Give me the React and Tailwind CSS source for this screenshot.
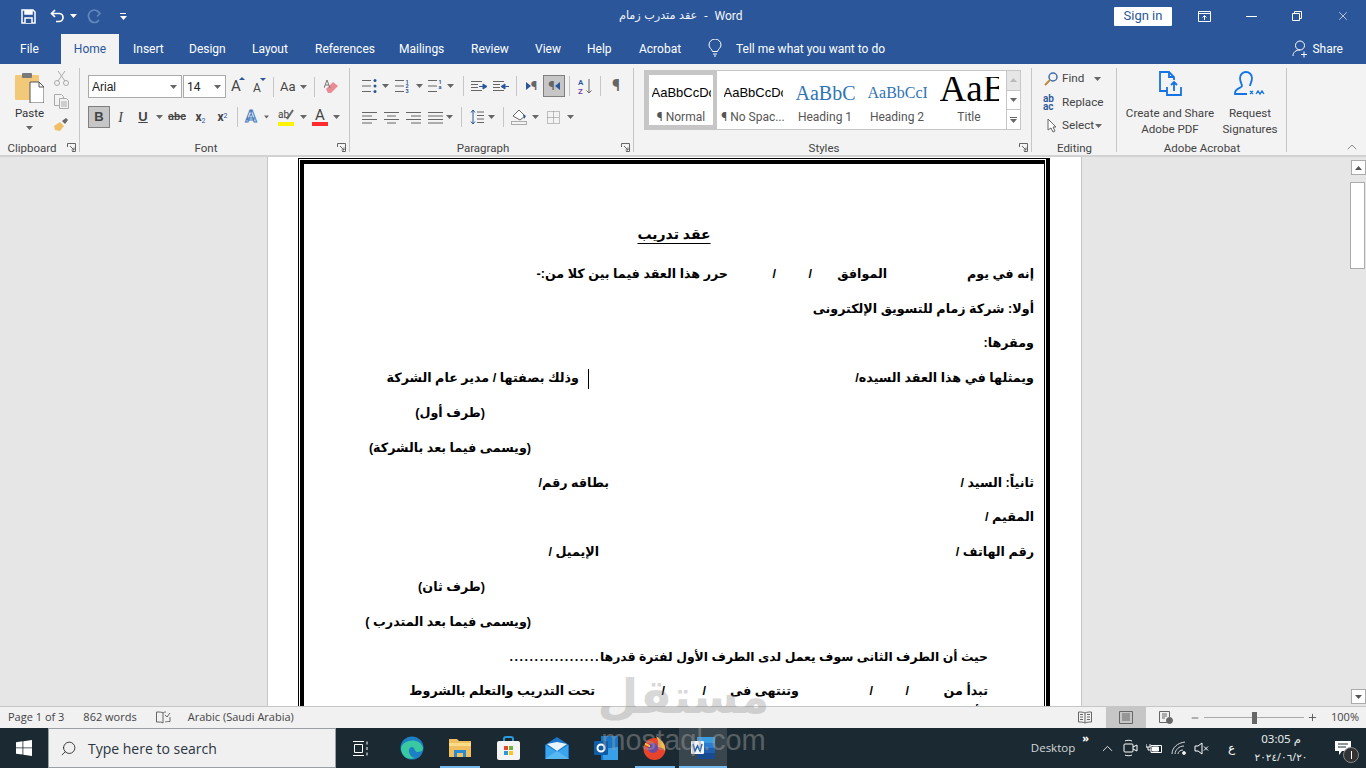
import React from "react";
import { Search, ChevronUp, X, Minus, Plus } from "lucide-react";

const Caret = ({ c = "#666" }) => (
  <svg width="7" height="4" viewBox="0 0 7 4"><path d="M0 0h7L3.5 4z" fill={c} /></svg>
);

// a cell of fixed width in the ribbon rows
const Cell = ({ w, children, on }) => (
  <div className={`${w} h-[22px] flex items-center justify-center shrink-0 ${on ? "bg-[#c6c6c6] border border-[#7f7f7f]" : ""}`}>{children}</div>
);

const Sep = () => <div className="w-px h-[20px] bg-[#c6c6c6] shrink-0" />;

const Launcher = () => (
  <svg width="9" height="9" viewBox="0 0 9 9" fill="none" stroke="#666"><path d="M.5 4V.5h8v8H5" /><path d="M3 3l4 4M7 4.5V7H4.5" /></svg>
);

const Lines = ({ rows }) => (
  <svg width="15" height="13" viewBox="0 0 15 13" stroke="#666" strokeWidth="1">
    {rows.map((r, i) => <path key={i} d={`M${r[0]} ${i * 3.5 + 1.5}H${r[1]}`} />)}
  </svg>
);

const Bullets = ({ dots }) => (
  <svg width="15" height="14" viewBox="0 0 15 14">
    <path d="M0 1.5h9M0 7h9M0 12.5h9" stroke="#666" />
    {dots}
  </svg>
);

function TitleBar() {
  return (
    <div className="h-[32px] flex items-center relative text-white bg-[#2b579a] [font-family:Roboto,sans-serif]">
      <div className="w-[21px]" />
      <svg width="15" height="15" viewBox="0 0 15 15" fill="none" stroke="#fff" strokeWidth="1.5">
        <path d="M1 1h11l2 2v11H1z" /><path d="M4 1v4h7V1" fill="#fff" /><path d="M4 14V9h7v5" fill="#2b579a" />
      </svg>
      <div className="w-[14px]" />
      <svg width="16" height="14" viewBox="0 0 16 14" fill="none" stroke="#fff" strokeWidth="1.7">
        <path d="M5 1L1.5 4.5 5 8" /><path d="M2 4.5h7a4 4 0 010 8H6" />
      </svg>
      <div className="ml-[4px]"><Caret c="#fff" /></div>
      <svg className="ml-[10px]" width="15" height="15" viewBox="0 0 15 15" fill="none" stroke="#5f86bd" strokeWidth="1.7">
        <path d="M10 1.5l3 3-3 3" /><path d="M12.5 4.5A5.5 5.5 0 102 9a5.5 5.5 0 0010 2" />
      </svg>
      <svg className="ml-[18px]" width="7" height="7" viewBox="0 0 7 7" fill="#fff"><path d="M0 0h6v1H0zM0 3h7L3.500 7z" /></svg>
      <div dir="ltr" className="absolute left-[619px] top-[7px] flex gap-[7px] text-[12px] leading-[18px] text-[#f4f6fa]">
        <span dir="rtl" className="[font-family:'DejaVu_Sans',sans-serif] text-[11.2px]">عقد متدرب زمام</span><span>-</span><span>Word</span>
      </div>
      <div className="ml-auto flex items-center">
        <div className="w-[58px] h-[19px] bg-white rounded-[1px] text-[#2b579a] text-[13px] flex items-center justify-center">Sign in</div>
        <svg className="ml-[26px]" width="13" height="11" viewBox="0 0 13 11" fill="none" stroke="#fff"><path d="M.5.500h12v10H.5zM.5 2.500h12M6.500 9V5M4.500 6.500l2-2 2 2" /></svg>
        <div className="ml-[35px] flex"><svg width="11" height="1" viewBox="0 0 11 1"><path d="M0 .5h11" stroke="#fff" /></svg></div>
        <svg className="ml-[35px]" width="10" height="10" viewBox="0 0 10 10" fill="none" stroke="#fff"><path d="M.5 2.500h7v7h-7zM2.500 2.500v-2h7v7h-2" /></svg>
        <X className="ml-[34px] mr-[16px]" size={14} strokeWidth={1.1} color="#fff" />
      </div>
    </div>
  );
}

const tabs = [
  ["Home", "w-[58px]"], ["Insert", "w-[56px]"], ["Design", "w-[63px]"], ["Layout", "w-[63px]"],
  ["References", "w-[84px]"], ["Mailings", "w-[72px]"], ["Review", "w-[64px]"], ["View", "w-[52px]"], ["Help", "w-[52px]"], ["Acrobat", "w-[84px]"],
];

function Tabs() {
  return (
    <div className="h-[32px] flex items-end bg-[#2b579a] text-[12px] text-white [font-family:Roboto,sans-serif]">
      <div className="w-[61px] h-[30px] pl-[20px] leading-[30px]">File</div>
      {tabs.map(([name, w], i) =>
        i === 0 ? (
          <div key={name} className={`${w} h-[30px] bg-[#f3f3f3] text-[#2b579a] text-center leading-[30px]`}>{name}</div>
        ) : (
          <div key={name} className={`${w} h-[30px] pl-[14px] leading-[30px] whitespace-nowrap`}>{name}</div>
        )
      )}
      <svg className="mb-[7px] ml-[-1px]" width="14" height="18" viewBox="0 0 14 18" fill="none" stroke="#fff"><path d="M4.500 12.500C4 10 1 9 1 6a6 6 0 0112 0c0 3-3 4-3.500 6.500zM5 15h4M6 17h2" /></svg>
      <div className="h-[30px] ml-[14px] leading-[30px]">Tell me what you want to do</div>
      <div className="ml-auto h-[30px] flex items-center mr-[23px]">
        <svg width="16" height="18" viewBox="0 0 16 18" fill="none" stroke="#fff"><circle cx="8" cy="5.500" r="4.500" /><path d="M1 16c0-4 3-6 7-6M9 14.500h6M12 11.500v6" /></svg>
        <span className="ml-[4px]">Share</span>
      </div>
    </div>
  );
}

const Group = ({ w, label, labelCls = "", launcher, children }) => (
  <div className={`${w} h-full flex flex-col relative shrink-0`}>
    <div className="flex-1 min-h-0">{children}</div>
    <div className={`h-[14px] text-[11.5px] leading-[14px] text-center text-[#444] ${labelCls}`}>{label}</div>
    {launcher && <div className="absolute right-[4px] bottom-[3px] flex"><Launcher /></div>}
    <div className="absolute right-0 top-[4px] bottom-[3px] w-px bg-[#c6c6c6]" />
  </div>
);

function Clipboard() {
  return (
    <Group w="w-[80px]" label="Clipboard" labelCls="pr-[16px]" launcher>
      <div className="flex">
        <div className="w-[50px] flex flex-col items-center pt-[8px] pl-[9px]">
          <svg width="29" height="31" viewBox="0 0 29 31">
            <rect x="0" y="3" width="24" height="25" rx="1" fill="#f2c879" />
            <rect x="7" y="1" width="10" height="5" rx="1" fill="#7a7a7a" />
            <path d="M15 10h9l5 5v16H15z" fill="#fff" stroke="#555" />
            <path d="M24 10v5h5" fill="none" stroke="#555" />
          </svg>
          <div className="text-[11.5px] leading-[16px] mt-[2px] text-[#333]">Paste</div>
          <div className="mt-[5px]"><Caret /></div>
        </div>
        <div className="flex flex-col items-center pt-[6px] gap-[8px] ml-[3px]">
          <svg width="15" height="16" viewBox="0 0 15 16" fill="none" stroke="#aaa"><circle cx="3" cy="13" r="2.500" /><circle cx="12" cy="13" r="2.500" /><path d="M4 11L11 1M11 11L4 1" /></svg>
          <svg width="15" height="15" viewBox="0 0 15 15" fill="#f3f3f3" stroke="#aaa"><path d="M.5.500h7l2 2v9h-9z" /><path d="M5.500 4.500h7l2 2v8h-9z" /><path d="M7 8h6M7 10h6M7 12h6" /></svg>
          <svg width="16" height="15" viewBox="0 0 16 15"><path d="M1 9l6-4 4 4-4 5-5-1z" fill="#f0c068" /><path d="M9 4l4-3 2 2-3 4z" fill="#666" /></svg>
        </div>
      </div>
    </Group>
  );
}

function Font() {
  return (
    <Group w="w-[270px]" label="Font" labelCls="pr-[18px]" launcher>
      <div className="pt-[11px] pl-[8px] text-[#444]">
        <div className="flex items-center h-[23px]">
          <div className="w-[94px] h-[23px] bg-white border border-[#aaa] flex items-center justify-between pl-[3px] pr-[4px] text-[12px] text-[#222] [font-family:'Liberation_Sans',sans-serif]">Arial<Caret /></div>
          <div className="w-[43px] h-[23px] bg-white border border-[#aaa] ml-px flex items-center justify-between pl-[3px] pr-[4px] text-[12px] text-[#222]">14<Caret /></div>
          <Cell w="w-[20px]"><span className="text-[15px] relative">A<span className="absolute right-[-4px] top-[2px] w-0 h-0 border-x-[3px] border-x-transparent border-b-[3px] border-b-[#2b579a]" /></span></Cell>
          <Cell w="w-[22px]"><span className="text-[12px] relative mt-[2px]">A<span className="absolute right-[-5px] top-[-1px] w-0 h-0 border-x-[3px] border-x-transparent border-t-[3px] border-t-[#2b579a]" /></span></Cell>
          <div className="w-[5px]" /><Sep />
          <div className="ml-[6px] text-[13px]">Aa</div>
          <div className="ml-[4px]"><Caret /></div>
          <div className="w-[7px]" /><Sep />
          <svg className="ml-[9px]" width="15" height="16" viewBox="0 0 15 16"><path d="M2 10l7-7 5 4-7 7H4z" fill="#e88c94" /><path d="M0 9L3 1l3 8M1.200 6h3.600" fill="none" stroke="#777" /></svg>
        </div>
        <div className="flex items-center h-[22px] mt-[8px]">
          <Cell w="w-[22px]" on><span className="font-bold text-[13px] [font-family:'Liberation_Sans',sans-serif]">B</span></Cell>
          <Cell w="w-[21px]"><span className="italic text-[14px] [font-family:'Liberation_Serif',serif]">I</span></Cell>
          <Cell w="w-[24px]"><span className="underline font-bold text-[13px] [font-family:'Liberation_Sans',sans-serif]">U</span></Cell>
          <div className="w-[9px] flex justify-center"><Caret /></div>
          <Cell w="w-[26px]"><span className="line-through text-[11px] font-semibold">abc</span></Cell>
          <Cell w="w-[21px]"><span className="font-bold text-[12px]">x<sub className="text-[7px] font-normal text-[#2b579a]">2</sub></span></Cell>
          <Cell w="w-[23px]"><span className="font-bold text-[12px]">x<sup className="text-[7px] font-normal text-[#2b579a]">2</sup></span></Cell>
          <div className="w-[3px]" /><Sep />
          <Cell w="w-[26px]"><span className="text-[17px] font-bold text-[#e8f0fa] [-webkit-text-stroke:1px_#4a7ebb]">A</span></Cell>
          <div className="w-[5px] flex justify-center"><Caret /></div>
          <div className="w-[9px]" />
          <div className="w-[16px] flex flex-col items-center relative">
            <span className="text-[10px] leading-[12px] mr-[5px]">ab</span>
            <svg className="absolute right-0 top-0" width="8" height="11" viewBox="0 0 8 11"><path d="M1 10l6-9" stroke="#666" strokeWidth="2" /></svg>
            <div className="w-[16px] h-[4px] bg-[#fff200] mt-px" />
          </div>
          <div className="w-[14px] flex justify-center ml-[2px]"><Caret /></div>
          <div className="w-[16px] ml-[2px] flex flex-col items-center">
            <span className="text-[15px] leading-[14px]">A</span>
            <div className="w-[16px] h-[4px] bg-[#ff2b2b]" />
          </div>
          <div className="w-[16px] flex justify-center"><Caret /></div>
        </div>
      </div>
    </Group>
  );
}

function Paragraph() {
  const dot = (y) => <circle key={y} cx="13" cy={y} r="1.500" fill="#2b579a" />;
  const smallNum = (y, t) => <text key={y} x="10.500" y={y} fontSize="5.500" fontWeight="700" fill="#2b579a">{t}</text>;
  return (
    <Group w="w-[284px]" label="Paragraph" labelCls="pr-[18px]" launcher>
      <div className="pt-[11px] pl-[8px]">
        <div className="flex items-center h-[22px]">
          <Cell w="w-[22px]"><Bullets dots={[dot(1.5), dot(7), dot(12.5)]} /></Cell>
          <div className="w-[10px] flex justify-center"><Caret /></div>
          <Cell w="w-[24px]"><Bullets dots={[smallNum(4.5, "1"), smallNum(9, "2"), smallNum(13.5, "3")]} /></Cell>
          <div className="w-[10px] flex justify-center"><Caret /></div>
          <Cell w="w-[22px]"><Bullets dots={[smallNum(5, "1"), smallNum(10, "a")]} /></Cell>
          <div className="w-[8px] flex justify-center"><Caret /></div>
          <div className="w-[9px]" /><Sep />
          <div className="w-[4px]" />
          <Cell w="w-[22px]"><svg width="16" height="11" viewBox="0 0 16 11"><path d="M0 .5h11M0 3.500h7M0 6.500h7M0 9.500h11" stroke="#666" /><path d="M8 5.500h4V3l4 2.500L12 8V5.500" fill="#2b579a" stroke="#2b579a" /></svg></Cell>
          <Cell w="w-[22px]"><svg width="16" height="11" viewBox="0 0 16 11"><path d="M0 .5h11M0 3.500h7M0 6.500h7M0 9.500h11" stroke="#666" /><path d="M16 5.500h-4V3L8 5.500 12 8V5.500" fill="#2b579a" stroke="#2b579a" /></svg></Cell>
          <div className="w-[4px]" /><Sep />
          <Cell w="w-[26px]"><span className="flex items-center text-[13px] text-[#666] font-bold pl-[3px]"><span className="w-0 h-0 border-y-[4px] border-y-transparent border-l-[5px] border-l-[#2b579a]" />¶</span></Cell>
          <div className="w-[22px] h-[22px] bg-[#c6c6c6] border border-[#7f7f7f] flex items-center justify-center text-[13px] text-[#666] font-bold shrink-0">¶<span className="w-0 h-0 border-y-[4px] border-y-transparent border-r-[5px] border-r-[#2b579a]" /></div>
          <div className="w-[4px]" /><Sep />
          <Cell w="w-[30px]"><svg width="15" height="17" viewBox="0 0 15 17" fill="none"><text x="0" y="7" fontSize="8" fontWeight="600" fill="#2b579a">A</text><text x="0" y="16" fontSize="8" fontWeight="600" fill="#7a3fa0">Z</text><path d="M11 1v14M8.500 12.500L11 15l2.500-2.500" stroke="#666" /></svg></Cell>
          <Sep />
          <Cell w="w-[30px]"><span className="text-[16px] text-[#666] font-bold">¶</span></Cell>
        </div>
        <div className="flex items-center h-[22px] mt-[9px]">
          <Cell w="w-[22px]"><Lines rows={[[0, 15], [0, 10], [0, 15], [0, 10]]} /></Cell>
          <Cell w="w-[22px]"><Lines rows={[[0, 15], [3, 12], [0, 15], [3, 12]]} /></Cell>
          <Cell w="w-[22px]"><Lines rows={[[0, 15], [5, 15], [0, 15], [5, 15]]} /></Cell>
          <Cell w="w-[22px]"><Lines rows={[[0, 15], [0, 15], [0, 15], [0, 15]]} /></Cell>
          <div className="w-[7px] flex justify-center"><Caret /></div>
          <div className="w-[8px]" /><Sep />
          <div className="w-[4px]" />
          <Cell w="w-[22px]"><svg width="14" height="16" viewBox="0 0 14 16" fill="none"><path d="M3 1v14M1 3.500L3 1l2 2.500M1 12.500L3 15l2-2.500" stroke="#2b579a" /><path d="M7 3h7M7 6.500h7M7 10h7M7 13.500h7" stroke="#666" /></svg></Cell>
          <div className="w-[7px] flex justify-center"><Caret /></div>
          <div className="w-[8px]" /><Sep />
          <div className="w-[3px]" />
          <Cell w="w-[24px]"><svg width="17" height="16" viewBox="0 0 17 16" fill="none"><path d="M2 7l6-6 6 6-5 4z" fill="#fff" stroke="#666" /><path d="M12 5l3 2-2 3z" fill="#2b579a" /><rect x=".5" y="12.500" width="15" height="3" stroke="#aaa" /></svg></Cell>
          <div className="w-[8px] flex justify-center"><Caret /></div>
          <div className="w-[7px]" />
          <Cell w="w-[14px]"><svg width="13" height="13" viewBox="0 0 13 13" fill="none" stroke="#888" strokeDasharray="1 1"><path d="M.5.500h12v12H.5zM6.500.500v12M.5 6.500h12" /></svg></Cell>
          <div className="ml-[7px] flex"><Caret /></div>
        </div>
      </div>
    </Group>
  );
}

const StyleItem = ({ preview, label, sel }) => (
  <div className={`w-[72px] h-full shrink-0 overflow-hidden flex flex-col items-center ${sel ? "border-[4px] border-[#c6c6c6] pt-[2px]" : "pt-[6px]"}`}>
    <div className="h-[31px] w-[59px] overflow-hidden flex items-center whitespace-nowrap">{preview}</div>
    <div className="text-[12px] leading-[16px] mt-[1px] text-[#555] whitespace-nowrap">{label}</div>
  </div>
);

function Styles() {
  const body = "text-[13px] text-black [font-family:'Liberation_Sans',sans-serif]";
  const serif = "[font-family:'Liberation_Serif',serif]";
  return (
    <Group w="w-[398px]" label="Styles" labelCls="pr-[18px]" launcher>
      <div className="ml-[10px] mt-[6px] w-[377px] h-[60px] flex bg-white border border-[#c6c6c6]">
        <div className="flex-1 flex overflow-hidden">
          <StyleItem sel preview={<span className={body}>AaBbCcDc</span>} label="¶ Normal" />
          <StyleItem preview={<span className={body}>AaBbCcDc</span>} label="¶ No Spac..." />
          <StyleItem preview={<span className={`text-[20px] text-[#2e74b5] ${serif}`}>AaBbC</span>} label="Heading 1" />
          <StyleItem preview={<span className={`text-[16px] text-[#2e74b5] ${serif}`}>AaBbCcI</span>} label="Heading 2" />
          <StyleItem preview={<span className={`text-[37px] leading-[31px] mb-[8px] text-black ${serif}`}>AaB</span>} label="Title" />
        </div>
        <div className="w-[14px] flex flex-col border-l border-[#c6c6c6]">
          <div className="flex-1 bg-[#e6e6e6] flex items-center justify-center"><svg width="7" height="4" viewBox="0 0 7 4"><path d="M0 4h7L3.500 0z" fill="#bbb" /></svg></div>
          <div className="flex-1 border-y border-[#c6c6c6] flex items-center justify-center"><Caret /></div>
          <div className="flex-1 flex flex-col gap-px items-center justify-center"><div className="w-[7px] h-px bg-[#666]" /><Caret /></div>
        </div>
      </div>
    </Group>
  );
}

function Editing() {
  return (
    <Group w="w-[85px]" label="Editing">
      <div className="pt-[3px] pl-[12px] text-[11.7px] text-[#444]">
        <div className="flex items-center h-[24px]">
          <svg width="14" height="14" viewBox="0 0 14 14" fill="none"><circle cx="9" cy="5" r="4" stroke="#3f6fb0" strokeWidth="1.500" /><path d="M6 8l-5 5" stroke="#c08a3e" strokeWidth="2" /></svg>
          <span className="ml-[4px]">Find</span>
          <div className="ml-[10px]"><Caret /></div>
        </div>
        <div className="flex items-center h-[23px]">
          <div className="w-[16px] ml-[-1px] text-[10px] leading-[8px] font-semibold text-[#2b579a]">ab<br />ac</div>
          <span className="ml-[3px]">Replace</span>
        </div>
        <div className="flex items-center h-[23px]">
          <svg className="ml-[3px]" width="10" height="15" viewBox="0 0 10 15" fill="#fff" stroke="#666"><path d="M1 1v11l3-2 2 4 2-1-2-4h3z" /></svg>
          <span className="ml-[5px]">Select</span>
          <div className="ml-[1px]"><Caret /></div>
        </div>
      </div>
    </Group>
  );
}

function Acrobat() {
  return (
    <Group w="w-[170px]" label="Adobe Acrobat">
      <div className="flex pt-[7px] text-[11.6px] leading-[16px] text-[#444] text-center">
        <div className="w-[104px] pl-[2px] flex flex-col items-center">
          <svg width="24" height="26" viewBox="0 0 24 26" fill="none" stroke="#1473e6" strokeWidth="1.800">
            <path d="M9 20H2V1h9l5 5v3M11 1v5h5" /><path d="M9 16v8h14v-8M16 20v-8M13 14l3-3 3 3" />
          </svg>
          <div className="mt-[8px] whitespace-nowrap">Create and Share<br />Adobe PDF</div>
        </div>
        <div className="w-[58px] flex flex-col items-center">
          <svg width="33" height="26" viewBox="0 0 33 26" fill="none" stroke="#1473e6" strokeWidth="1.800">
            <path d="M12 1a6 6 0 00-6 6c0 4 2 6 2 8s-7 2-7 7v1h12M12 1a6 6 0 016 6c0 4-2 6-2 8" />
            <path d="M15 27h17M16 20l3 3m0-3l-3 3M22 23l2-3 2 3 2-3 2 3" strokeWidth="1.300" />
          </svg>
          <div className="mt-[8px]">Request<br />Signatures</div>
        </div>
      </div>
    </Group>
  );
}

function Ribbon() {
  return (
    <div className="h-[93px] bg-[#f3f3f3] border-b-2 border-[#d2d2d2] flex relative [font-family:Roboto,sans-serif]">
      <Clipboard />
      <Font />
      <Paragraph />
      <Styles />
      <Editing />
      <Acrobat />
      <ChevronUp className="absolute right-[6px] bottom-0" size={16} strokeWidth={1} color="#555" />
    </div>
  );
}

// page rows: a cell's width runs from its right edge to the right edge of the next one
const Row = ({ children, cls = "" }) => <div className={`h-[34.8px] flex items-center whitespace-nowrap ${cls}`}>{children}</div>;

function Page() {
  return (
    <div className="ml-[267px] w-[815px] h-full bg-white border-x border-[#c6c6c6] pl-[30px] pt-px overflow-hidden">
      {/* double page border: thin outside on the left and top, thick outside on the right */}
      <div className="w-[752px] h-[700px] border-l border-t border-r-[4px] border-black pl-px pt-px pr-px">
        <div className="h-full border-l-[4px] border-t-[4px] border-r border-black pt-[53px]" dir="rtl">
          <div className="h-[35px] flex justify-center mb-[5px]">
            <span className="text-[14px] font-bold underline underline-offset-[4px] leading-[35px]">عقد تدريب</span>
          </div>
          <div className="text-[12.7px] font-bold text-black pr-[10px]">
            <Row><span className="w-[147px]">إنه في يوم</span><span className="w-[75px]">الموافق</span><span className="w-[36px]">/</span><span className="w-[48px]">/</span><span>حرر هذا العقد فيما بين كلا من:-</span></Row>
            <Row>أولا: شركة زمام للتسويق الإلكترونى</Row>
            <Row>ومقرها:</Row>
            <Row>
              <span className="w-[445px]">ويمثلها في هذا العقد السيده/</span>
              <span className="w-px h-[20px] bg-black ml-[9px]" />
              <span>وذلك بصفتها / مدير عام الشركة</span>
            </Row>
            <Row cls="pr-[549px]">(طرف أول)</Row>
            <Row cls="pr-[503px]">(ويسمى فيما بعد بالشركة)</Row>
            <Row><span className="w-[425px]">ثانياً: السيد /</span><span>بطاقه رقم/</span></Row>
            <Row>المقيم /</Row>
            <Row><span className="w-[435px]">رقم الهاتف /</span><span>الإيميل /</span></Row>
            <Row cls="pr-[549px]">(طرف ثان)</Row>
            <Row cls="pr-[503px]">(ويسمى فيما بعد المتدرب )</Row>
            <Row cls="pr-[46px]"><span className="text-[12.4px]">حيث أن الطرف الثانى سوف يعمل لدى الطرف الأول لفترة قدرها</span><span className="tracking-[1.500px]">..................</span></Row>
            <Row cls="pr-[46px]"><span className="w-[79px]">تبدأ من</span><span className="w-[36px]">/</span><span className="w-[74px]">/</span><span className="w-[93px]">وتنتهى فى</span><span className="w-[41px]">/</span><span className="w-[70px]">/</span><span>تحت التدريب والتعلم بالشروط</span></Row>
            <Row cls="pr-[46px] mt-[-13px]">فأولة</Row>
          </div>
        </div>
      </div>
    </div>
  );
}

function Scrollbar() {
  const btn = "w-[15px] h-[15px] bg-white border border-[#ababab] flex items-center justify-center";
  return (
    <div className="w-[16px] h-full flex flex-col items-center pt-[3px] pb-[2px] bg-[#e6e6e6]">
      <div className={btn}><svg width="7" height="4" viewBox="0 0 7 4"><path d="M0 4h7L3.500 0z" fill="#555" /></svg></div>
      <div className="flex-1 w-full pt-[7px]">
        <div className="w-[15px] h-[87px] bg-white border border-[#ababab]" />
      </div>
      <div className={btn}><Caret c="#555" /></div>
    </div>
  );
}

function StatusBar() {
  return (
    <div className="h-[22px] bg-[#f1f1f1] border-t border-[#c6c6c6] flex items-center text-[11px] text-[#444]">
      <span className="ml-[8px]">Page 1 of 3</span>
      <span className="ml-[19px]">862 words</span>
      <svg className="ml-[19px]" width="15" height="13" viewBox="0 0 15 13" fill="none" stroke="#666"><path d="M7 2C6 1 4 1 .5 1v10C4 11 6 11 7 12V2zM7 2c1-1 2-1 3-1M9 11c0 0 1-.5 5-.5V6" /><path d="M9 4l2 2 3-4" /></svg>
      <span className="ml-[17px]">Arabic (Saudi Arabia)</span>
      <div className="ml-auto flex items-center h-full">
        <svg width="14" height="13" viewBox="0 0 14 13" fill="none" stroke="#666"><path d="M7 2C5 1 3 1 .5 1v10C3 11 5 11 7 12c2-1 4-1 6.500-1V1C11 1 9 1 7 2zM7 2v10M2 3.500h3M2 6h3M2 8.500h3M9 3.500h3M9 6h3M9 8.500h3" /></svg>
        <div className="w-[40px] h-full bg-[#c6c6c6] ml-[14px] flex items-center justify-center">
          <svg width="14" height="13" viewBox="0 0 14 13" fill="none" stroke="#666"><path d="M.5.500h13v12H.5zM3 3h8M3 5h8M3 7h8M3 9h8" /></svg>
        </div>
        <svg className="ml-[13px]" width="14" height="13" viewBox="0 0 14 13" fill="none" stroke="#666"><path d="M8 11.500H.5V.500h10V6M3 3h5M3 5h5M3 7h3" /><circle cx="10.500" cy="9.500" r="3" fill="#666" /></svg>
        <Minus className="ml-[17px]" size={10} color="#555" />
        <div className="w-[100px] h-px bg-[#aaa] ml-[4px] relative flex justify-center items-center">
          <div className="w-[5px] h-[12px] bg-[#666]" />
        </div>
        <Plus className="ml-[3px]" size={11} color="#555" />
        <span className="ml-[13px] mr-[7px]">100%</span>
      </div>
    </div>
  );
}

function TaskIcons() {
  const under = "absolute bottom-0 h-[2px] bg-[#76b9ed]";
  return (
    <div className="flex items-center h-full ml-[19px]">
      <div className="w-[48px] h-full flex items-center justify-center">
        <svg width="24" height="24" viewBox="0 0 24 24"><circle cx="12" cy="12" r="11.500" fill="#1d7fc4" /><path d="M1 12C3 3 20 1 23 12c0 3-3 4-6 4-3-1-2-5-5-5-5 0-4 10 3 11C7 25 1 19 1 12z" fill="#38c9a0" /></svg>
      </div>
      <div className="w-[48px] h-full flex items-center justify-center relative">
        <svg width="22" height="20" viewBox="0 0 22 20"><path d="M0 1h8l2 2h12v16H0z" fill="#f0c060" /><path d="M0 5h22v3H0z" fill="#ffdd8a" /><path d="M5 12h12v7h-3v-4H8v4H5z" fill="#2a8ad4" /></svg>
        <span className={`${under} left-[4px] w-[40px]`} />
      </div>
      <div className="w-[48px] h-full flex items-center justify-center">
        <svg width="23" height="24" viewBox="0 0 23 24"><path d="M7 6V3a2 2 0 012-2h5a2 2 0 012 2v3" fill="none" stroke="#2a9ad8" strokeWidth="2" /><rect y="5" width="23" height="19" rx="2" fill="#f4f4f4" /><rect x="7" y="10" width="4" height="4" fill="#e8452c" /><rect x="12" y="10" width="4" height="4" fill="#6cb33f" /><rect x="7" y="15" width="4" height="4" fill="#2a9ad8" /><rect x="12" y="15" width="4" height="4" fill="#fcc425" /></svg>
      </div>
      <div className="w-[50px] h-full flex items-center justify-center">
        <svg width="24" height="22" viewBox="0 0 24 22"><path d="M0 8l12-8 12 8v14H0z" fill="#1c75c8" /><path d="M1 8l11 7 11-7v14H1z" fill="#3aa5ec" /><path d="M0 22l12-8 12 8z" fill="#58b8f2" /><path d="M2 7l10 7 10-7-10-2z" fill="#e8f4fc" /></svg>
      </div>
      <div className="w-[48px] h-full flex items-center justify-center">
        <svg width="25" height="24" viewBox="0 0 25 24"><rect x="7" y="0" width="17" height="24" fill="#1776c8" /><path d="M9 13l15-2v13H9z" fill="#38a0e8" /><rect x="0" y="5" width="14" height="14" rx="1" fill="#0f5ca8" /><circle cx="7" cy="12" r="3.500" fill="none" stroke="#fff" strokeWidth="2" /></svg>
      </div>
      <div className="w-[49px] h-full flex items-center justify-center relative">
        <svg width="23" height="24" viewBox="0 0 23 24"><circle cx="11.500" cy="13" r="11" fill="#e8442c" /><path d="M13 0c6 4 10 9 9 15-2-3-4-4-7-4 1-4 0-7-2-11z" fill="#f5c04a" /><circle cx="10" cy="12" r="5" fill="#6b4aa8" /><path d="M2 8c2 0 3 2 5 2" stroke="#f5c04a" strokeWidth="2" fill="none" /></svg>
        <span className={`${under} left-[5px] w-[40px]`} />
      </div>
      <div className="w-[48px] h-full bg-[#39464d] flex items-center justify-center relative">
        <svg width="24" height="22" viewBox="0 0 24 22"><rect x="6" y="0" width="18" height="6" fill="#3a9ce0" /><rect x="6" y="6" width="18" height="5" fill="#2a7cd0" /><rect x="6" y="11" width="18" height="5" fill="#1f5fb0" /><rect x="6" y="16" width="18" height="6" fill="#184a90" /><rect x="0" y="4" width="13" height="13" rx="1" fill="#f4f6f8" /><path d="M2 7l2 7 2.500-5L9 14l2-7" fill="none" stroke="#1f5fb0" strokeWidth="1.500" /></svg>
        <span className={`${under} left-0 w-[48px]`} />
      </div>
    </div>
  );
}

function Taskbar() {
  return (
    <div className="h-[40px] bg-[#1b2a32] flex items-center text-white">
      <div className="w-[48px] flex justify-center">
        <svg width="16" height="16" viewBox="0 0 16 16" fill="#fff"><path d="M0 2.200l6.500-.9v6.200H0zM7.300 1.200L16 0v7.500H7.300zM0 8.300h6.500v6.300L0 13.700zM7.300 8.300H16V16l-8.700-1.200z" /></svg>
      </div>
      <div className="w-[288px] h-[40px] bg-[#f0f0f0] border border-[#9aa0a4] flex items-center">
        <Search className="ml-[11px] scale-x-[-1]" size={17} strokeWidth={1.2} color="#222" />
        <span className="ml-[11px] text-[14px] text-[#2a3540]">Type here to search</span>
      </div>
      <svg className="ml-[16px]" width="17" height="15" viewBox="0 0 17 15" fill="none" stroke="#fff"><path d="M1 .5h11M1 14.500h11M2.500 3.500h8v8h-8zM15 .5v3M15 6v3M15 11.500v3" /></svg>
      <TaskIcons />
      <div className="ml-auto flex items-center h-full">
        <span className="text-[11.5px] text-[#d5d8da] mr-[7px]">Desktop</span>
        <span className="text-[11px] font-bold mb-[20px] leading-[10px] mr-[10px]">»</span>
        <ChevronUp size={17} strokeWidth={1.2} />
        <svg className="ml-[7px]" width="16" height="18" viewBox="0 0 16 18" fill="none" stroke="#fff"><rect x="1" y="5" width="9" height="8" rx="1" /><path d="M10 8l4-2v6l-4-2M2 2c2-1 5-1 7 0M2 16c2 1 5 1 7 0" /></svg>
        <svg className="ml-[7px]" width="17" height="11" viewBox="0 0 17 11" fill="none" stroke="#fff"><path d="M5 2.500h10.500v7H5z" /><path d="M6.500 4h6v4h-6z" fill="#fff" /><path d="M0 1v3h4V1M2 4v3h3" /></svg>
        <svg className="ml-[8px]" width="15" height="14" viewBox="0 0 15 14" fill="none" stroke="#d5d8da"><path d="M1 13C1 7 6 2 14 1M4 13c0-4 4-8 9-8M7 13c0-2 2-4 5-4" /><circle cx="13" cy="12" r="1.500" fill="#fff" /></svg>
        <svg className="ml-[8px]" width="15" height="13" viewBox="0 0 15 13" fill="none" stroke="#fff"><path d="M1 4h3l4-3v11L4 9H1zM10 4.500l4 4M14 4.500l-4 4" /></svg>
        <span className="ml-[19px] text-[12px] w-[10px]">ع</span>
        <div dir="rtl" className="w-[70px] ml-[8px] text-[11.5px] leading-[18px] text-center text-[#e6e9ea] [font-family:'Noto_Sans','DejaVu_Sans',sans-serif]">
          <div>م 03:05</div>
          <div className="text-[10.5px]">٢٠٢٤/٠٦/٢٠</div>
        </div>
        <div className="ml-[19px] mr-[15px] relative">
          <svg width="16" height="14" viewBox="0 0 16 14" fill="#fff"><path d="M0 0h16v10H7l-3 4v-4H0z" /><path d="M3 3h10M3 6h8" stroke="#1b2a32" /></svg>
          <span className="absolute left-[8px] top-[6px] w-[16px] h-[16px] rounded-full bg-[#333] border border-[#888] flex items-center justify-center"><span className="w-px h-[8px] bg-white" /></span>
        </div>
      </div>
    </div>
  );
}

export default function App() {
  return (
    <div className="w-[1366px] h-[768px] overflow-hidden flex flex-col relative bg-[#e6e6e6] [font-family:'Open_Sans',sans-serif]">
      <TitleBar />
      <Tabs />
      <Ribbon />
      <div className="flex-1 min-h-0 flex bg-[#e6e6e6]">
        <div className="flex-1 min-w-0 h-full [font-family:'Liberation_Sans','DejaVu_Sans',sans-serif]"><Page /></div>
        <Scrollbar />
      </div>
      <StatusBar />
      <Taskbar />
      {/* site watermark over the picture */}
      <div className="absolute left-[596px] top-[667px] w-[175px] flex flex-col items-center pointer-events-none [font-family:'Liberation_Sans','DejaVu_Sans',sans-serif] font-bold">
        <div dir="rtl" className="text-[47px] leading-[60px] text-[#808080] opacity-30">مستقل</div>
        <div className="text-[29px] leading-[26px] font-normal text-[#a0a0a0] opacity-45">mostaql.com</div>
      </div>
    </div>
  );
}
